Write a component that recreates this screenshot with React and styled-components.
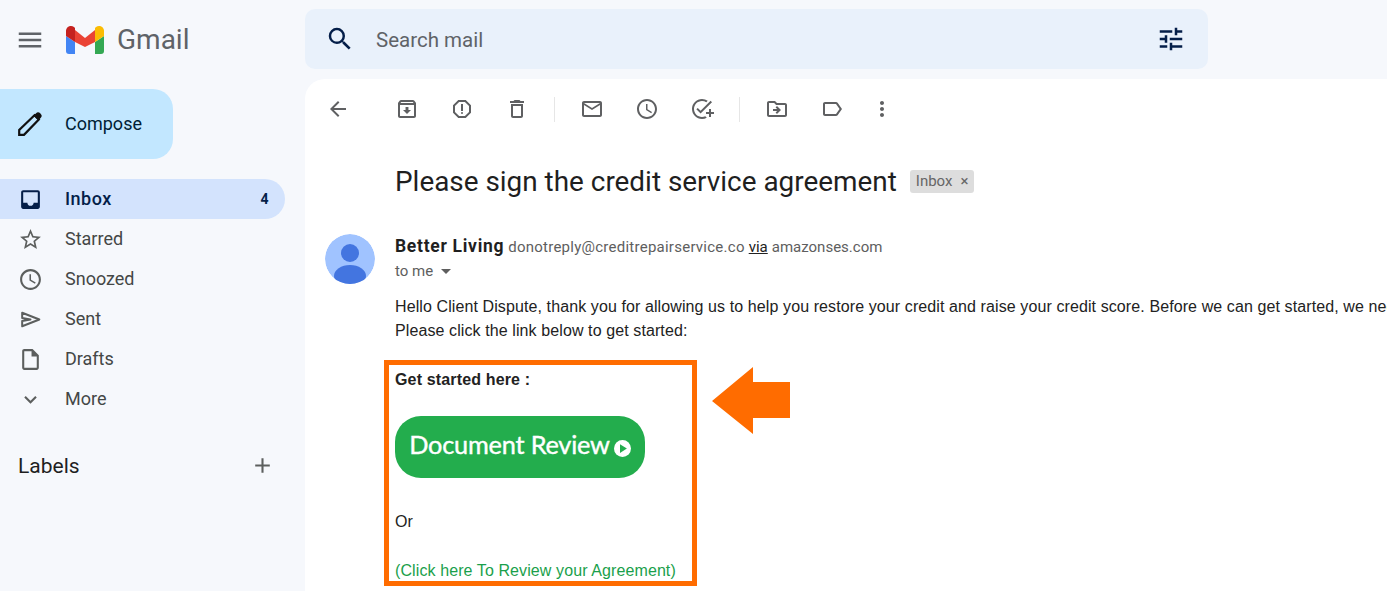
import React from "react";
import styled, { createGlobalStyle } from "styled-components";
import {
  MdMenu,
  MdSearch,
  MdTune,
  MdInbox,
  MdStarBorder,
  MdAccessTime,
  MdOutlineInsertDriveFile,
  MdExpandMore,
  MdAdd,
  MdArrowBack,
  MdOutlineArchive,
  MdOutlineReport,
  MdOutlineDelete,
  MdOutlineEmail,
  MdOutlineAddTask,
  MdOutlineDriveFileMove,
  MdOutlineLabel,
  MdMoreVert,
  MdArrowDropDown,
  MdPlayArrow,
} from "react-icons/md";

const GlobalStyle = createGlobalStyle`
  html, body {
    margin: 0;
    height: 100%;
    overflow: hidden;
    background: #f6f8fc;
  }
  * { box-sizing: border-box; }
`;

const Page = styled.div`
  display: grid;
  grid-template-columns: 305px 1fr;
  width: 1387px;
  height: 591px;
  overflow: hidden;
  background: #f6f8fc;
  font-family: Roboto, "Liberation Sans", sans-serif;
`;

const Sidebar = styled.aside`
  display: flex;
  flex-direction: column;
`;

const Brand = styled.div`
  display: flex;
  align-items: center;
  gap: 21px;
  height: 79px;
  padding-left: 15px;
  color: #5f6368;
`;

const Logo = styled.div`
  display: flex;
  align-items: center;
  gap: 13px;
`;

const Wordmark = styled.span`
  font-size: 28px;
  color: #5f6368;
`;

const Compose = styled.div`
  display: flex;
  align-items: center;
  width: 173px;
  height: 70px;
  margin-top: 10px;
  padding: 0 0 1px 18px;
  gap: 23px;
  border-radius: 0 20px 20px 0;
  background: #c2e7ff;
  color: #001d35;
  font-size: 18px;
`;

const NavList = styled.nav`
  display: flex;
  flex-direction: column;
  margin-top: 20px;
  width: 285px;
`;

const NavRow = styled.div`
  display: flex;
  align-items: center;
  height: 40px;
  padding: 0 16px 0 18px;
  border-radius: 0 20px 20px 0;
  background: ${(p) => (p.$active ? "#d3e3fd" : "transparent")};
  color: ${(p) => (p.$active ? "#041e49" : "#444746")};
  font-size: 18px;
  font-weight: ${(p) => (p.$active ? 500 : 400)};
  letter-spacing: ${(p) => (p.$active ? "0.5px" : "0")};
  svg {
    width: 25px;
    height: 25px;
    flex: none;
    color: ${(p) => (p.$active ? "#041e49" : "#5c5f5e")};
  }
`;

const NavLabel = styled.span`
  margin: -1px 0 0 22px;
  flex: 1;
`;

const Count = styled.span`
  font-size: 14px;
  font-weight: 700;
`;

const LabelsHead = styled.div`
  display: flex;
  align-items: center;
  justify-content: space-between;
  margin-top: 34px;
  width: 285px;
  padding: 0 10px 0 18px;
  font-size: 21px;
  color: #1f1f1f;
  svg { color: #5c5f5e; }
`;

const Right = styled.div`
  display: flex;
  flex-direction: column;
  min-width: 0;
`;

const SearchBand = styled.div`
  display: flex;
  align-items: flex-start;
  height: 79px;
  padding-top: 9px;
`;

const SearchBar = styled.div`
  display: flex;
  align-items: center;
  width: 903px;
  height: 60px;
  padding: 0 22px 0 20px;
  border-radius: 10px;
  background: #e9f1fb;
  color: #041e49;
`;

const SearchText = styled.span`
  flex: 1;
  margin-left: 21px;
  padding-top: 2px;
  font-size: 20.5px;
  color: #5f6368;
`;

const Main = styled.main`
  position: relative;
  flex: 1;
  overflow: hidden;
  border-radius: 20px 0 0 0;
  background: #fff;
  padding-top: 12px;
`;

const Toolbar = styled.div`
  display: flex;
  align-items: center;
  height: 36px;
  padding-left: 21px;
  color: #5f6062;
`;

const ToolIcon = styled.span`
  display: flex;
  justify-content: center;
  width: 24px;
  margin-right: ${(p) => p.$gap ?? 31}px;
  svg {
    width: 24px;
    height: 24px;
    flex: none;
  }
`;

const ToolDivider = styled.span`
  width: 1px;
  height: 25px;
  background: #e6e6e6;
  margin-right: 25px;
`;

const Content = styled.div`
  padding-left: 90px;
`;

const SubjectRow = styled.div`
  display: flex;
  align-items: center;
  margin-top: 37px;
  height: 34px;
`;

const Subject = styled.h1`
  margin: 0;
  font-size: 27.9px;
  font-weight: 400;
  color: #1f1f1f;
  white-space: nowrap;
`;

const Chip = styled.span`
  display: flex;
  align-items: center;
  gap: 8px;
  height: 23px;
  margin-left: 13px;
  padding: 0 6px 0 6px;
  border-radius: 3px;
  background: #dddddd;
  color: #666;
  font-size: 15px;
`;

const Sender = styled.div`
  position: relative;
  margin-top: 38px;
`;

const AvatarSlot = styled.div`
  position: absolute;
  left: -70px;
  top: -2px;
`;

const SenderLine = styled.div`
  display: flex;
  align-items: baseline;
  height: 24px;
  font-size: 15px;
  color: #5e5e5e;
  white-space: nowrap;
  gap: 4px;
`;

const SenderName = styled.b`
  font-size: 17.5px;
  font-weight: 700;
  letter-spacing: 0.7px;
  color: #1f1f1f;
`;

const SenderEmail = styled.span`
  letter-spacing: 0.25px;
`;

const Via = styled.span`
  color: #222;
  text-decoration: underline;
`;

const ToLine = styled.div`
  display: flex;
  align-items: center;
  margin-top: -1px;
  font-size: 15px;
  color: #5e5e5e;
  svg { margin-left: 1px; }
`;

const Body = styled.div`
  margin-top: 12px;
  font-family: "Liberation Sans", Arial, sans-serif;
  font-size: 16px;
  letter-spacing: 0.1px;
  line-height: 24px;
  color: #222;
  white-space: nowrap;
`;

const Highlight = styled.div`
  display: flex;
  flex-direction: column;
  width: 313px;
  height: 226px;
  margin: 17px 0 0 -11px;
  padding: 3px 0 0 6px;
  border: 5px solid #ff6c00;
  font-family: "Liberation Sans", Arial, sans-serif;
  font-size: 16px;
  letter-spacing: 0.1px;
  color: #222;
  white-space: nowrap;
`;

const Strong = styled.b`
  flex: none;
  line-height: 24px;
  letter-spacing: 0.15px;
`;

const DocButton = styled.div`
  display: flex;
  flex: none;
  align-items: center;
  justify-content: center;
  gap: 4px;
  width: 250px;
  height: 62px;
  margin-top: 24px;
  padding-bottom: 7px;
  border-radius: 26px;
  background: #23ad4d;
  color: #fff;
  font-family: Lato, sans-serif;
  font-size: 25.3px;
  letter-spacing: -0.2px;
  -webkit-text-stroke: 0.4px #fff;
`;

const PlayDot = styled.span`
  display: flex;
  align-items: center;
  justify-content: center;
  width: 17px;
  height: 17px;
  margin-top: 9px;
  border-radius: 50%;
  background: #fff;
  color: #23ad4d;
`;

const OrLine = styled.div`
  flex: none;
  margin-top: 32px;
  line-height: 24px;
`;

const ReviewLink = styled.div`
  flex: none;
  margin-top: 25px;
  line-height: 24px;
  color: #1a9f4b;
`;

const ArrowSlot = styled.div`
  position: absolute;
  left: 407px;
  top: 288px;
`;

function GmailLogo() {
  return (
    <svg width="38" height="28" viewBox="0 0 38 28">
      <path d="M9 4L19 12L29 4V16L19 21L9 16z" fill="#ea4335" />
      <path d="M0 10L9 16V28H3a3 3 0 0 1-3-3z" fill="#4285f4" />
      <path d="M38 10L29 16V28H35a3 3 0 0 0 3-3z" fill="#34a853" />
      <path d="M0 10V5C0 .8 4.800-1.300 8 1L9 2V16z" fill="#c5221f" />
      <path d="M38 10V5C38 .8 33.200-1.300 30 1L29 2V16z" fill="#fbbc04" />
    </svg>
  );
}

function PencilIcon() {
  return (
    <svg width="24" height="24" viewBox="0 0 24 24">
      <path d="M1.200 22.800V18L16.500 3.200L20.800 7.500L6 22.800z" fill="none" stroke="#111" strokeWidth="2.200" />
      <path d="M15.500 3.500L19 .5Q20.500-.2 22 1L23.500 3Q24 4.500 23 5.500L20.500 8.500z" fill="#111" />
    </svg>
  );
}

function SentIcon() {
  return (
    <svg viewBox="0 0 24 24">
      <path d="M4 5.500L20.500 12L4 18.500V13.500L12 12L4 10.500z" fill="none" stroke="currentColor" strokeWidth="1.900" strokeLinejoin="round" />
    </svg>
  );
}

function Avatar() {
  return (
    <svg width="50" height="50" viewBox="0 0 50 50">
      <defs>
        <clipPath id="avatarClip">
          <circle cx="25" cy="25" r="25" />
        </clipPath>
      </defs>
      <g clipPath="url(#avatarClip)">
        <circle cx="25" cy="25" r="25" fill="#a0c3ff" />
        <circle cx="25" cy="19" r="9" fill="#4375e0" />
        <ellipse cx="25" cy="42" rx="16" ry="11" fill="#4375e0" />
      </g>
    </svg>
  );
}

function BigArrow() {
  return (
    <svg width="78" height="67" viewBox="0 0 78 67">
      <path d="M0 34L41 0V15H78V51H41V67z" fill="#ff6c00" />
    </svg>
  );
}

const navItems = [
  { label: "Inbox", Icon: MdInbox, active: true, count: 4 },
  { label: "Starred", Icon: MdStarBorder },
  { label: "Snoozed", Icon: MdAccessTime },
  { label: "Sent", Icon: SentIcon },
  { label: "Drafts", Icon: MdOutlineInsertDriveFile },
  { label: "More", Icon: MdExpandMore },
];

export default function App() {
  return (
    <Page>
      <GlobalStyle />
      <Sidebar>
        <Brand>
          <MdMenu size={30} />
          <Logo>
            <GmailLogo />
            <Wordmark>Gmail</Wordmark>
          </Logo>
        </Brand>
        <Compose>
          <PencilIcon />
          Compose
        </Compose>
        <NavList>
          {navItems.map(({ label, Icon, active, count }) => (
            <NavRow key={label} $active={active}>
              <Icon />
              <NavLabel>{label}</NavLabel>
              {count && <Count>{count}</Count>}
            </NavRow>
          ))}
        </NavList>
        <LabelsHead>
          Labels
          <MdAdd size={25} />
        </LabelsHead>
      </Sidebar>
      <Right>
        <SearchBand>
          <SearchBar>
            <MdSearch size={30} />
            <SearchText>Search mail</SearchText>
            <MdTune size={30} />
          </SearchBar>
        </SearchBand>
        <Main>
          <Toolbar>
            <ToolIcon $gap={45}><MdArrowBack /></ToolIcon>
            <ToolIcon><MdOutlineArchive /></ToolIcon>
            <ToolIcon><MdOutlineReport /></ToolIcon>
            <ToolIcon $gap={25}><MdOutlineDelete /></ToolIcon>
            <ToolDivider />
            <ToolIcon><MdOutlineEmail /></ToolIcon>
            <ToolIcon><MdAccessTime /></ToolIcon>
            <ToolIcon $gap={25}><MdOutlineAddTask /></ToolIcon>
            <ToolDivider />
            <ToolIcon><MdOutlineDriveFileMove /></ToolIcon>
            <ToolIcon $gap={26}><MdOutlineLabel /></ToolIcon>
            <ToolIcon><MdMoreVert /></ToolIcon>
          </Toolbar>
          <Content>
            <SubjectRow>
              <Subject>Please sign the credit service agreement</Subject>
              <Chip>Inbox <span>×</span></Chip>
            </SubjectRow>
            <Sender>
              <AvatarSlot><Avatar /></AvatarSlot>
              <SenderLine>
                <SenderName>Better Living</SenderName>
                <SenderEmail>donotreply@creditrepairservice.co</SenderEmail>
                <Via>via</Via>
                <span>amazonses.com</span>
              </SenderLine>
              <ToLine>
                to me
                <MdArrowDropDown size={24} />
              </ToLine>
            </Sender>
            <Body>
              Hello Client Dispute, thank you for allowing us to help you restore your credit and raise your credit score. Before we can get started, we need your signature.
              <br />
              Please click the link below to get started:
            </Body>
            <Highlight>
              <Strong>Get started here :</Strong>
              <DocButton>
                Document Review
                <PlayDot><MdPlayArrow size={15} /></PlayDot>
              </DocButton>
              <OrLine>Or</OrLine>
              <ReviewLink>(Click here To Review your Agreement)</ReviewLink>
            </Highlight>
          </Content>
          <ArrowSlot><BigArrow /></ArrowSlot>
        </Main>
      </Right>
    </Page>
  );
}
